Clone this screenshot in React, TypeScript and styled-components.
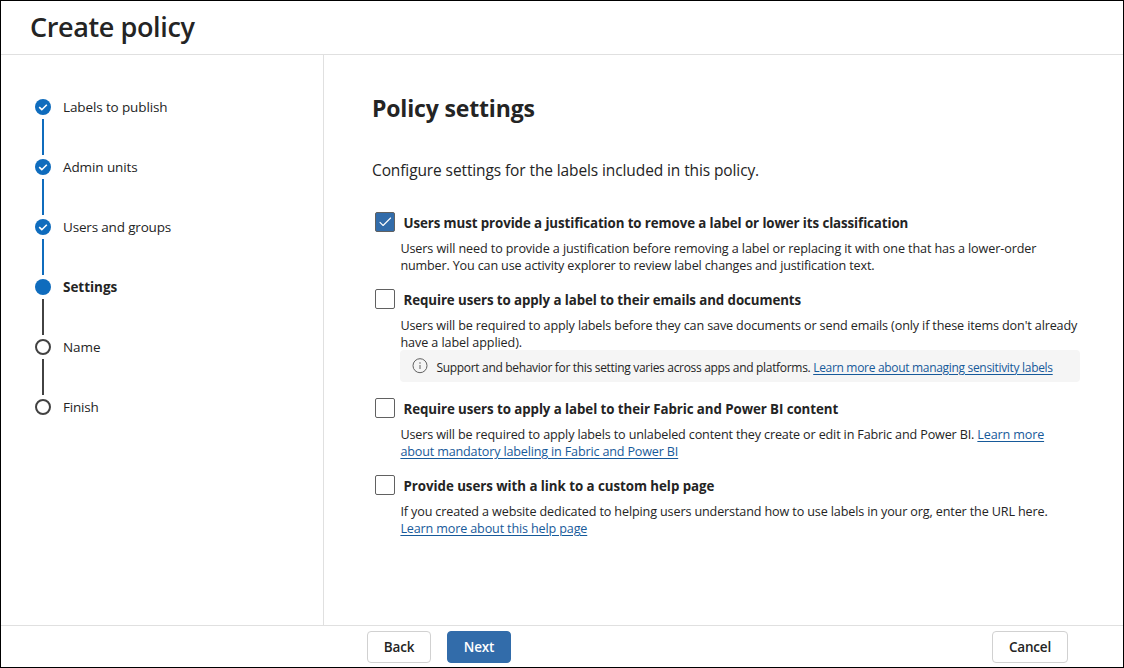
import { useState } from "react";
import type { ReactNode } from "react";
import { createGlobalStyle, styled } from "styled-components";

type StepState = "done" | "current" | "todo";

interface IStep {
  label: string;
  state: StepState;
  tracking: number;
}

interface ILine {
  content: ReactNode;
  tracking: number;
}

interface ISetting {
  id: string;
  title: string;
  tracking: number;
  lines: ILine[];
  note?: ReactNode;
}

const COLORS = {
  text: "#242424",
  line: "#e0e0e0",
  brand: "#0f6cbd",
  button: "#326caa",
  link: "#175a9a",
  neutral: "#424242",
};

const GlobalStyle = createGlobalStyle`
  * {
    box-sizing: border-box;
  }

  body {
    margin: 0;
    background: #ffffff;
    color: ${COLORS.text};
    font-family: "Open Sans", "Noto Sans", sans-serif;
  }
`;

const Page = styled.div`
  display: flex;
  flex-direction: column;
  height: 668px;
  border: 1px solid #000000;
  background: #ffffff;
`;

const Header = styled.header`
  display: flex;
  align-items: center;
  height: 54px;
  padding: 0 0 2px 29px;
  border-bottom: 1px solid ${COLORS.line};
`;

const HeaderTitle = styled.h1`
  margin: 0;
  font-size: 27px;
  line-height: 36px;
  font-weight: 600;
  letter-spacing: -0.38px;
`;

const Body = styled.div`
  display: flex;
  flex: 1;
`;

const Sidebar = styled.nav`
  width: 323px;
  padding: 44px 0 0 34px;
  border-right: 1px solid ${COLORS.line};
`;

const StepList = styled.ol`
  display: flex;
  flex-direction: column;
  gap: 4px;
  margin: 0;
  padding: 0;
  list-style: none;
`;

const StepItem = styled.li`
  display: flex;
  flex-direction: column;
  gap: 4px;
`;

const StepRow = styled.div`
  display: flex;
  align-items: center;
  gap: 12px;
  height: 16px;
`;

const Dot = styled.span<{ $state: StepState }>`
  display: flex;
  width: 16px;
  height: 16px;
  border-radius: 50%;
  border: ${(props) =>
    props.$state === "todo" ? `2px solid ${COLORS.neutral}` : "none"};
  background: ${(props) =>
    props.$state === "todo" ? "#ffffff" : COLORS.brand};
`;

const StepLabel = styled.span<{ $current: boolean; $tracking: number }>`
  font-size: 13.5px;
  line-height: 20px;
  font-weight: ${(props) => (props.$current ? 700 : 400)};
  letter-spacing: ${(props) => props.$tracking}px;
  white-space: nowrap;
`;

const Connector = styled.span<{ $done: boolean }>`
  width: 2px;
  height: 36px;
  margin-left: 7px;
  background: ${(props) => (props.$done ? COLORS.brand : COLORS.neutral)};
`;

const Content = styled.main`
  flex: 1;
  padding: 37px 0 0 48px;
`;

const PageTitle = styled.h2`
  margin: 0;
  font-size: 23px;
  line-height: 32px;
  font-weight: 700;
  letter-spacing: -0.16px;
`;

const Intro = styled.p`
  margin: 35px 0 30px;
  font-size: 15.5px;
  line-height: 23px;
  letter-spacing: -0.11px;
`;

const SettingList = styled.div`
  display: flex;
  flex-direction: column;
  gap: 16px;
  padding-left: 3px;
`;

const SettingLabel = styled.label`
  display: flex;
  align-items: center;
  gap: 8.5px;
  height: 20px;
`;

const HiddenInput = styled.input`
  position: absolute;
  opacity: 0;
`;

const Box = styled.span<{ $checked: boolean }>`
  display: flex;
  align-items: center;
  justify-content: center;
  width: 20px;
  height: 20px;
  border: 1px solid #616161;
  border-radius: 2px;
  background: ${(props) => (props.$checked ? COLORS.button : "#ffffff")};
`;

const SettingTitle = styled.span<{ $tracking: number }>`
  padding-top: 2px;
  font-size: 13.3px;
  line-height: 20px;
  font-weight: 700;
  letter-spacing: ${(props) => props.$tracking}px;
  white-space: nowrap;
`;

const Description = styled.div`
  height: 33px;
  margin: 8px 0 0 25.4px;
`;

const Line = styled.div<{ $tracking: number }>`
  font-size: 12.6px;
  line-height: 17px;
  letter-spacing: ${(props) => props.$tracking}px;
  white-space: nowrap;
`;

const Link = styled.a`
  color: ${COLORS.link};
  text-decoration: underline;
  text-decoration-thickness: 1px;
  text-underline-offset: 2px;
`;

const Note = styled.div`
  display: flex;
  align-items: center;
  width: 680px;
  height: 32px;
  margin-left: 25px;
  padding-left: 12px;
  border-radius: 4px;
  background: #f5f5f5;
  font-size: 12px;
  line-height: 17px;
  letter-spacing: -0.313px;
  white-space: nowrap;
`;

const NoteText = styled.span`
  padding: 2px 0 0 8.4px;
`;

const Footer = styled.footer`
  display: flex;
  align-items: flex-start;
  gap: 16px;
  height: 42px;
  padding: 5px 55px 0 366px;
  border-top: 1px solid ${COLORS.line};
`;

const Button = styled.button<{ $primary?: boolean; $width: number }>`
  width: ${(props) => props.$width}px;
  height: 32px;
  padding: 0;
  border: 1px solid ${(props) => (props.$primary ? COLORS.button : "#d1d1d1")};
  border-radius: 4px;
  background: ${(props) => (props.$primary ? COLORS.button : "#ffffff")};
  color: ${(props) => (props.$primary ? "#ffffff" : COLORS.text)};
  font-family: inherit;
  font-size: 13.5px;
  font-weight: 600;
  line-height: 20px;
  letter-spacing: -0.2px;

  &:last-child {
    margin-left: auto;
  }
`;

const STEPS: IStep[] = [
  { label: "Labels to publish", state: "done", tracking: -0.12 },
  { label: "Admin units", state: "done", tracking: -0.1 },
  { label: "Users and groups", state: "done", tracking: -0.17 },
  { label: "Settings", state: "current", tracking: -0.04 },
  { label: "Name", state: "todo", tracking: -0.05 },
  { label: "Finish", state: "todo", tracking: -0.18 },
];

const SETTINGS: ISetting[] = [
  {
    id: "justification",
    title:
      "Users must provide a justification to remove a label or lower its classification",
    tracking: -0.09,
    lines: [
      {
        content:
          "Users will need to provide a justification before removing a label or replacing it with one that has a lower-order",
        tracking: -0.108,
      },
      {
        content:
          "number. You can use activity explorer to review label changes and justification text.",
        tracking: -0.158,
      },
    ],
  },
  {
    id: "documents",
    title: "Require users to apply a label to their emails and documents",
    tracking: -0.085,
    lines: [
      {
        content:
          "Users will be required to apply labels before they can save documents or send emails (only if these items don't already",
        tracking: -0.135,
      },
      { content: "have a label applied).", tracking: -0.09 },
    ],
    note: (
      <>
        Support and behavior for this setting varies across apps and platforms.{" "}
        <Link>Learn more about managing sensitivity labels</Link>
      </>
    ),
  },
  {
    id: "fabric",
    title: "Require users to apply a label to their Fabric and Power BI content",
    tracking: -0.072,
    lines: [
      {
        content: (
          <>
            Users will be required to apply labels to unlabeled content they
            create or edit in Fabric and Power BI. <Link>Learn more</Link>
          </>
        ),
        tracking: -0.15,
      },
      {
        content: <Link>about mandatory labeling in Fabric and Power BI</Link>,
        tracking: -0.165,
      },
    ],
  },
  {
    id: "help",
    title: "Provide users with a link to a custom help page",
    tracking: -0.04,
    lines: [
      {
        content:
          "If you created a website dedicated to helping users understand how to use labels in your org, enter the URL here.",
        tracking: -0.134,
      },
      { content: <Link>Learn more about this help page</Link>, tracking: -0.15 },
    ],
  },
];

function StepCheck() {
  return (
    <svg width="16" height="16" viewBox="0 0 16 16" fill="none">
      <path d="M4.2 8.2 6.8 10.7 11.8 5.7" stroke="#fff" strokeWidth="1.6" />
    </svg>
  );
}

function BoxCheck() {
  return (
    <svg width="18" height="18" viewBox="0 0 18 18" fill="none">
      <path
        d="M4 9.4 7.1 12.5 14.6 5"
        stroke="#fff"
        strokeWidth="1.1"
        strokeLinecap="round"
        strokeLinejoin="round"
      />
    </svg>
  );
}

function InfoIcon() {
  return (
    <svg width="16" height="16" viewBox="0 0 16 16" fill="none">
      <circle cx="8" cy="7.7" r="7" stroke="#616161" />
      <path d="M8 7v4" stroke="#616161" />
      <circle cx="8" cy="5" r="0.75" fill="#616161" />
    </svg>
  );
}

export default function App() {
  const [checked, setChecked] = useState<string[]>(["justification"]);

  const toggle = (id: string) => {
    setChecked((prev) =>
      prev.includes(id) ? prev.filter((item) => item !== id) : [...prev, id]
    );
  };

  return (
    <Page>
      <GlobalStyle />
      <Header>
        <HeaderTitle>Create policy</HeaderTitle>
      </Header>
      <Body>
        <Sidebar>
          <StepList>
            {STEPS.map((step, index) => (
              <StepItem key={step.label}>
                <StepRow>
                  <Dot $state={step.state}>
                    {step.state === "done" && <StepCheck />}
                  </Dot>
                  <StepLabel
                    $current={step.state === "current"}
                    $tracking={step.tracking}
                  >
                    {step.label}
                  </StepLabel>
                </StepRow>
                {index < STEPS.length - 1 && (
                  <Connector $done={step.state === "done"} />
                )}
              </StepItem>
            ))}
          </StepList>
        </Sidebar>
        <Content>
          <PageTitle>Policy settings</PageTitle>
          <Intro>
            Configure settings for the labels included in this policy.
          </Intro>
          <SettingList>
            {SETTINGS.map((setting) => {
              const isChecked = checked.includes(setting.id);
              return (
                <div key={setting.id}>
                  <SettingLabel>
                    <HiddenInput
                      type="checkbox"
                      checked={isChecked}
                      onChange={() => toggle(setting.id)}
                    />
                    <Box $checked={isChecked}>{isChecked && <BoxCheck />}</Box>
                    <SettingTitle $tracking={setting.tracking}>
                      {setting.title}
                    </SettingTitle>
                  </SettingLabel>
                  <Description>
                    {setting.lines.map((line, index) => (
                      <Line key={index} $tracking={line.tracking}>
                        {line.content}
                      </Line>
                    ))}
                  </Description>
                  {setting.note && (
                    <Note>
                      <InfoIcon />
                      <NoteText>{setting.note}</NoteText>
                    </Note>
                  )}
                </div>
              );
            })}
          </SettingList>
        </Content>
      </Body>
      <Footer>
        <Button $width={64}>Back</Button>
        <Button $primary $width={64}>
          Next
        </Button>
        <Button $width={76}>Cancel</Button>
      </Footer>
    </Page>
  );
}
